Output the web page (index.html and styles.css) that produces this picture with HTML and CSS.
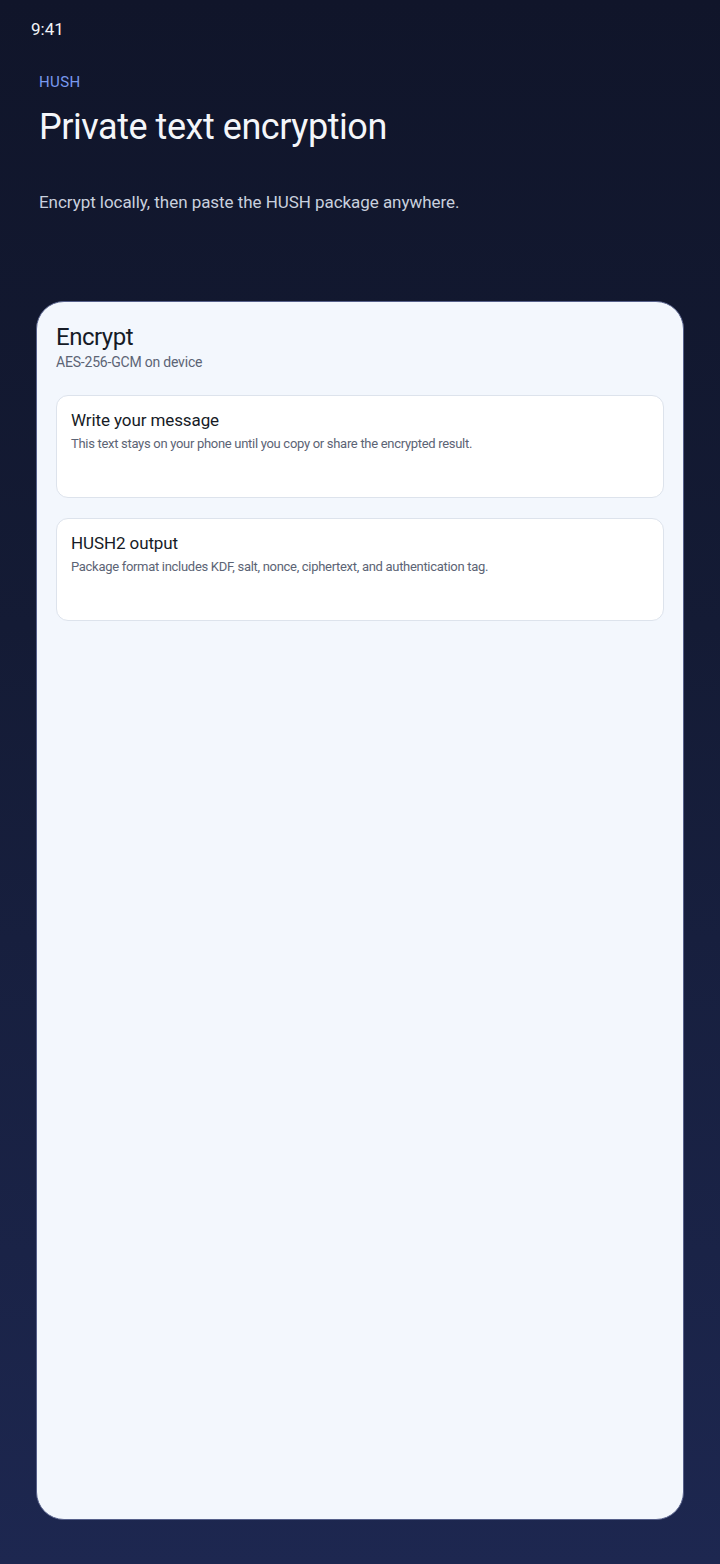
FILE: index.html
```html
<!DOCTYPE html>
<html lang="en">
<head>
<meta charset="utf-8">
<title>HUSH</title>
<link rel="stylesheet" href="styles.css">
</head>
<body>
<div class="screen">
  <div class="status">9:41</div>
  <header class="hero">
    <div class="brand">HUSH</div>
    <h1 class="title">Private text encryption</h1>
    <p class="lead">Encrypt locally, then paste the HUSH package anywhere.</p>
  </header>
  <main class="card">
    <h2 class="card-title">Encrypt</h2>
    <div class="card-sub">AES-256-GCM on device</div>
    <section class="field">
      <div class="field-title">Write your message</div>
      <div class="field-desc">This text stays on your phone until you copy or share the encrypted result.</div>
    </section>
    <section class="field">
      <div class="field-title">HUSH2 output</div>
      <div class="field-desc">Package format includes KDF, salt, nonce, ciphertext, and authentication tag.</div>
    </section>
  </main>
</div>
</body>
</html>
```
FILE: styles.css
```css
* { box-sizing: border-box; }
html, body { margin: 0; padding: 0; }
body {
  font-family: Roboto, "Noto Sans", sans-serif;
  background: #111629;
}
.screen {
  width: 720px;
  height: 1564px;
  background: linear-gradient(180deg, #10152a 0%, #141b35 40%, #1d2750 100%);
  display: flex;
  flex-direction: column;
  padding: 0 36px 44px 36px;
}
.status {
  color: #f2f4f8;
  font-size: 17px;
  line-height: 20px;
  padding-top: 19px;
  margin-left: -5px;
  height: 50px;
}
.hero {
  padding: 22px 0 0 3px;
  height: 251px;
}
.brand {
  color: #7a9af0;
  font-size: 15px;
  line-height: 20px;
  letter-spacing: 0.4px;
}
.title {
  margin: 13px 0 0 0;
  color: #f4f6fa;
  font-weight: 400;
  font-size: 36px;
  line-height: 44px;
  letter-spacing: -0.45px;
}
.lead {
  margin: 41px 0 0 0;
  color: #c9d0de;
  font-size: 17px;
  line-height: 24px;
  letter-spacing: -0.05px;
}
.card {
  flex: 1;
  background: #f3f7fd;
  border: 1.5px solid #56608a;
  border-radius: 28px;
  padding: 20px 19px 20px 19px;
  display: flex;
  flex-direction: column;
}
.card-title {
  margin: 0;
  font-weight: 400;
  font-size: 24px;
  line-height: 30px;
  color: #161b26;
  letter-spacing: -0.5px;
}
.card-sub {
  margin-top: 1px;
  font-size: 14px;
  line-height: 18px;
  color: #5c6475;
  letter-spacing: -0.2px;
}
.field {
  background: #ffffff;
  border: 1px solid #dde3ec;
  border-radius: 12px;
  height: 103px;
  padding: 13px 14px;
  margin-top: 20px;
}
.card-sub + .field { margin-top: 24px; }
.field-title {
  font-size: 17px;
  line-height: 22px;
  color: #161b26;
  letter-spacing: -0.1px;
}
.field-desc {
  margin-top: 4px;
  font-size: 13px;
  line-height: 18px;
  color: #5c6475;
  letter-spacing: -0.3px;
}
```
